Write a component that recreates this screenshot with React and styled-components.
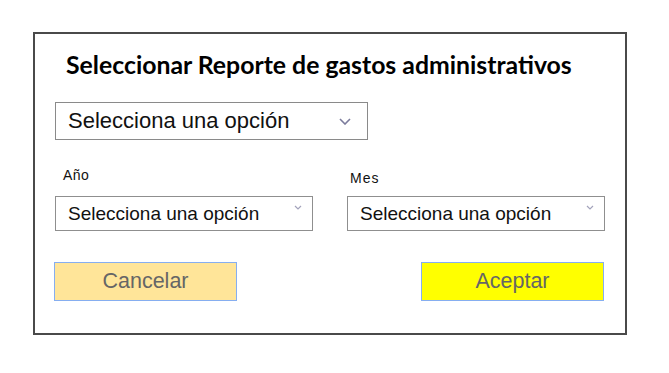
import React from 'react';
import styled, { createGlobalStyle } from 'styled-components';

const GlobalStyle = createGlobalStyle`
  body {
    margin: 0;
    background: #fff;
    font-family: "Liberation Sans", Arial, sans-serif;
  }
`;

const Page = styled.div`
  padding: 32px 0 0 33px;
`;

const Card = styled.div`
  box-sizing: border-box;
  width: 594px;
  height: 303px;
  border: 2px solid #4a4a4a;
  background: #fff;
  padding: 0 21px 0 20px;
  display: flex;
  flex-direction: column;
`;

const Title = styled.h2`
  margin: 15px 0 0 11px;
  font-family: Lato, "Open Sans", sans-serif;
  font-weight: 700;
  font-size: 24.8px;
  line-height: 32px;
  color: #000;
`;

const SelectBox = styled.div`
  box-sizing: border-box;
  width: ${(p) => p.width}px;
  height: ${(p) => p.height}px;
  border: 1px solid ${(p) => (p.big ? '#8a8a8a' : '#8f8f8f')};
  background: #fff;
  display: flex;
  align-items: ${(p) => (p.big ? 'center' : 'flex-start')};
  justify-content: space-between;
  padding: ${(p) => (p.big ? '0 16px 0 12px' : '0 10px 0 12px')};
  font-size: ${(p) => (p.big ? 22 : 19)}px;
  color: #111;
  cursor: pointer;
`;

const SelectText = styled.span`
  line-height: ${(p) => (p.big ? 36 : 33)}px;
  white-space: nowrap;
`;

const Chevron = styled.svg`
  flex: none;
  margin-top: ${(p) => (p.big ? 0 : 8)}px;
`;

const MainSelect = styled.div`
  margin-top: 21px;
`;

const FieldsRow = styled.div`
  margin-top: 27px;
  display: flex;
  gap: 34px;
  align-items: flex-end;
`;

const Field = styled.div`
  display: flex;
  flex-direction: column;
`;

const Label = styled.label`
  font-size: 14px;
  letter-spacing: ${(p) => p.spacing || 0.6}px;
  line-height: 16px;
  color: #111;
  margin: 0 0 ${(p) => p.gap}px ${(p) => p.indent}px;
`;

const Actions = styled.div`
  margin-top: 31px;
  display: flex;
  justify-content: space-between;
`;

const ActionButton = styled.button`
  box-sizing: border-box;
  width: 183px;
  height: 39px;
  margin-left: ${(p) => p.offset || 0}px;
  border: 1px solid #86aef0;
  background: ${(p) => p.bg};
  color: #666;
  font-family: "Liberation Sans", Arial, sans-serif;
  font-size: 21.5px;
  padding: 0;
  cursor: pointer;
`;

function ChevronIcon({ big }) {
  if (big) {
    return (
      <Chevron big width="12" height="7" viewBox="0 0 12 7">
        <polyline points="1,1 6,6 11,1" fill="none" stroke="#7b7b9c" strokeWidth="1.6" />
      </Chevron>
    );
  }
  return (
    <Chevron width="8" height="5" viewBox="0 0 8 5">
      <polyline points="1,1 4,4 7,1" fill="none" stroke="#a3a3bb" strokeWidth="1.2" />
    </Chevron>
  );
}

function Select({ width, height, big }) {
  return (
    <SelectBox width={width} height={height} big={big}>
      <SelectText big={big}>Selecciona una opción</SelectText>
      <ChevronIcon big={big} />
    </SelectBox>
  );
}

export default function App() {
  return (
    <>
      <GlobalStyle />
      <Page>
        <Card>
          <Title>Seleccionar Reporte de gastos administrativos</Title>
          <MainSelect>
            <Select big width={313} height={38} />
          </MainSelect>
          <FieldsRow>
            <Field>
              <Label indent={8} gap={13} spacing={0.4}>Año</Label>
              <Select width={258} height={35} />
            </Field>
            <Field>
              <Label indent={3} gap={10} spacing={1}>Mes</Label>
              <Select width={258} height={35} />
            </Field>
          </FieldsRow>
          <Actions>
            <ActionButton bg="#ffe599" offset={-1}>Cancelar</ActionButton>
            <ActionButton bg="#ffff00">Aceptar</ActionButton>
          </Actions>
        </Card>
      </Page>
    </>
  );
}
